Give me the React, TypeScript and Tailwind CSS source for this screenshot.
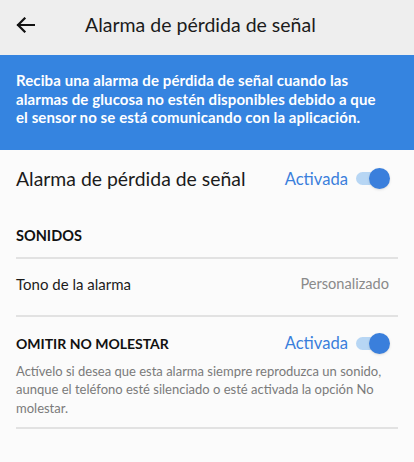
import React from 'react';

const font = { fontFamily: '"Lato", "Noto Sans", sans-serif' };

function Toggle() {
  return (
    <div className="relative h-[21px] w-[34px] shrink-0">
      <div className="absolute left-0 top-[4px] h-[13px] w-[30px] rounded-full bg-[#b7d6f4]" />
      <div className="absolute right-0 top-0 h-[21px] w-[21px] rounded-full bg-[#3a7fdc] shadow-sm" />
    </div>
  );
}

function Divider() {
  return <div className="mx-4 h-[2px] bg-[#e2e2e2]" />;
}

export default function App() {
  return (
    <div className="h-[462px] w-[414px] overflow-hidden bg-[#fbfbfb]" style={font}>
      <header className="flex h-[55px] items-center bg-[#eeeeee] pb-[5px]">
        <svg className="ml-[16px]" width="19" height="16" viewBox="0 0 19 16" fill="none">
          <path d="M18 8H2M8.5 1.5L2 8l6.5 6.5" stroke="#111" strokeWidth="2.2" strokeLinecap="square" />
        </svg>
        <h1 className="ml-[50px] text-[19.5px] text-[#1b1b1b]">Alarma de pérdida de señal</h1>
      </header>

      <div className="h-[95px] bg-[#3584e0] pl-4 pr-[32px] pt-[16px]">
        <p className="text-[15px] font-bold leading-[18.5px] tracking-[0.1px] text-white">
          Reciba una alarma de pérdida de señal cuando las alarmas de glucosa no estén disponibles debido a que el sensor no se está comunicando con la aplicación.
        </p>
      </div>

      <div className="flex h-[58px] items-center justify-between pl-4 pr-[24px]">
        <span className="text-[19.4px] text-[#1b1b1b]">Alarma de pérdida de señal</span>
        <div className="flex items-center gap-[8px]">
          <span className="text-[16.6px] text-[#3a7fdc]">Activada</span>
          <Toggle />
        </div>
      </div>

      <div className="flex h-[49px] items-center px-4 pt-[6px]">
        <span className="text-[14.5px] font-bold text-[#111]">SONIDOS</span>
      </div>
      <Divider />

      <div className="flex h-[56px] items-center justify-between px-4 pb-[6px]">
        <span className="text-[15px] text-[#1b1b1b]">Tono de la alarma</span>
        <span className="pr-[9px] text-[14.6px] text-[#8a8a8a]">Personalizado</span>
      </div>
      <Divider />

      <div className="px-4 pb-[10px] pt-[14px]">
        <div className="flex items-center justify-between pr-[8px]">
          <span className="text-[14px] font-bold text-[#111]">OMITIR NO MOLESTAR</span>
          <div className="flex items-center gap-[8px]">
            <span className="text-[16.6px] text-[#3a7fdc]">Activada</span>
            <Toggle />
          </div>
        </div>
        <p className="mt-[6px] text-[13px] leading-[18.5px] text-[#7a7a7a]">
          Actívelo si desea que esta alarma siempre reproduzca un sonido, aunque el teléfono esté silenciado o esté activada la opción No molestar.
        </p>
      </div>
      <Divider />
    </div>
  );
}
